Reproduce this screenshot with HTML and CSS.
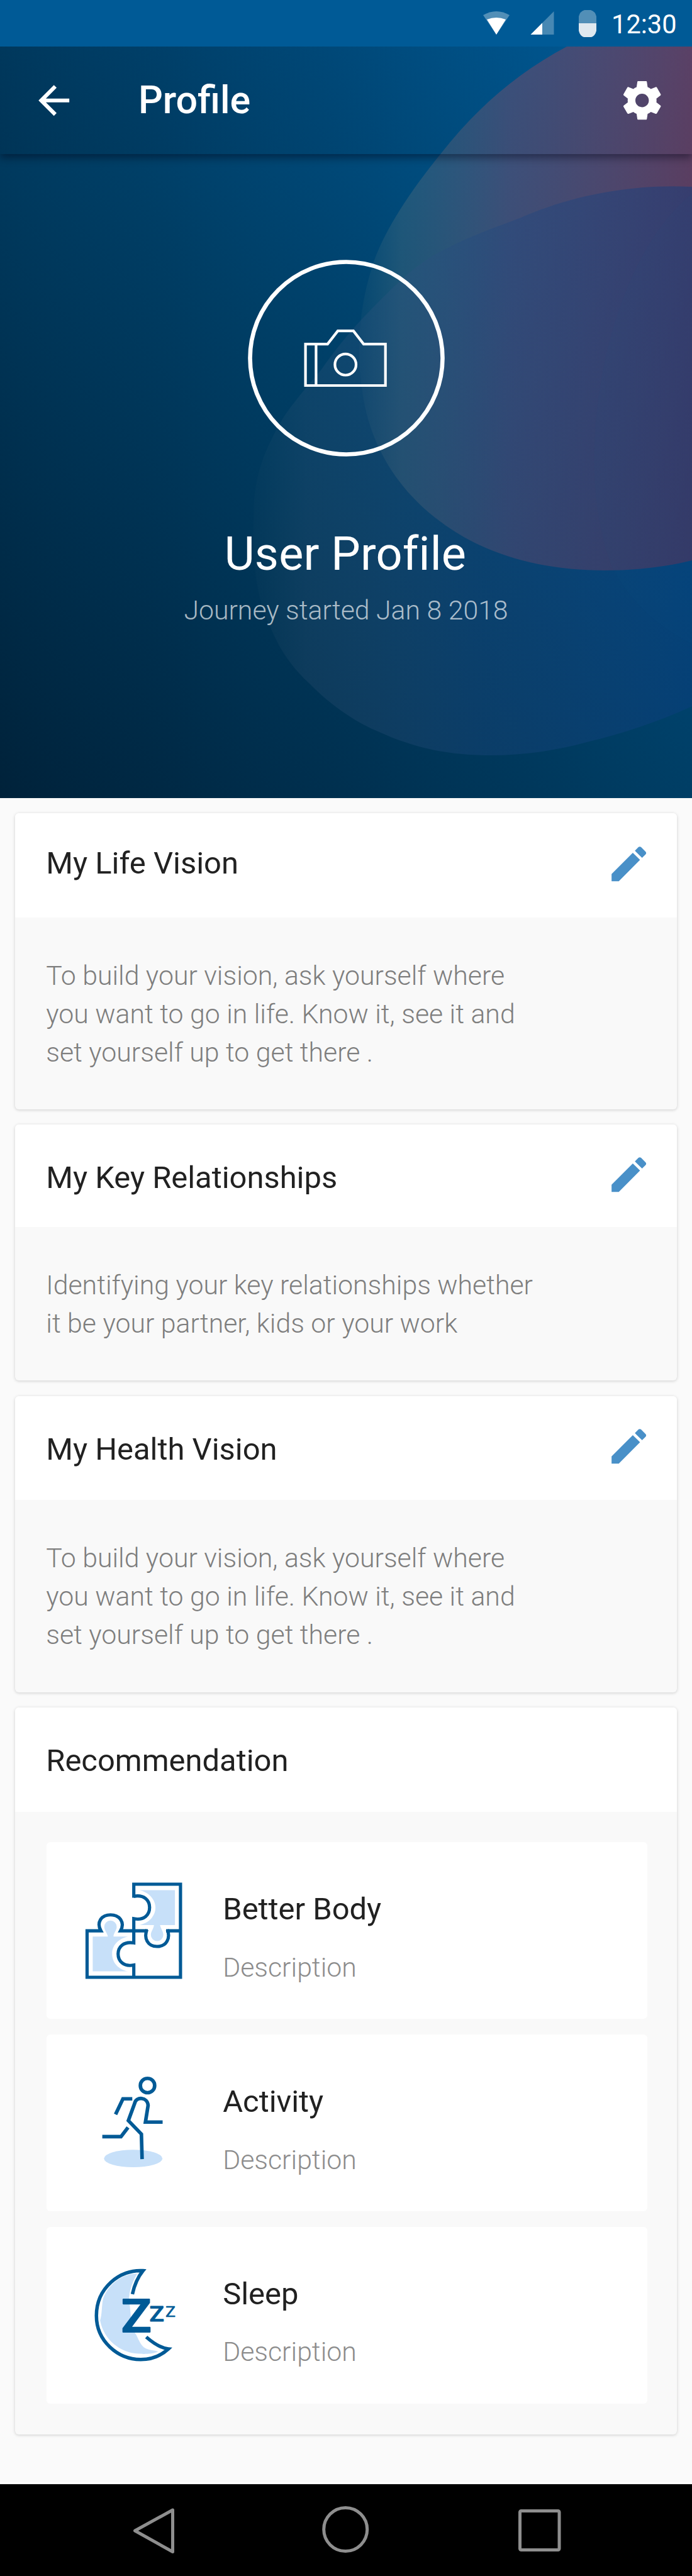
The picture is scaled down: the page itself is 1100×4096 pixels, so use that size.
FILE: index.html
```html
<!DOCTYPE html>
<html lang="en">
<head>
<meta charset="utf-8">
<title>Profile</title>
<link rel="stylesheet" href="styles.css">
</head>
<body>
<div class="status">
  <svg class="wifi" viewBox="0 0 42 37"><path d="M0 6Q21-6 42 6L21 37Z" fill="#fff" opacity=".32"/><path d="M6 13Q21 7 36 13L21 37Z" fill="#fff"/></svg>
  <svg class="signal" viewBox="0 0 38 38"><path d="M38 0V38H0Z" fill="#fff" opacity=".28"/><path d="M19 19V38H0Z" fill="#fff"/></svg>
  <svg class="battery" viewBox="0 0 28 43"><path d="M0 21V10Q2 2 9 0H19Q26 2 28 10V21Z" fill="#fff" opacity=".32"/><path d="M0 21H28V33Q26 41 20 43H8Q2 41 0 33Z" fill="#dfe8ef"/></svg>
  <span class="clock">12:30</span>
</div>
<header class="hero">
  <svg class="blobs" viewBox="0 74 1100 1195" preserveAspectRatio="none">
    <defs>
      <linearGradient id="red" gradientUnits="userSpaceOnUse" x1="574" y1="0" x2="1100" y2="0">
        <stop offset="0" stop-color="#6f8c8c" stop-opacity=".06"/>
        <stop offset=".12" stop-color="#7c8480" stop-opacity=".24"/>
        <stop offset=".45" stop-color="#a05068" stop-opacity=".38"/>
        <stop offset="1" stop-color="#c81f26" stop-opacity=".45"/>
      </linearGradient>
      <linearGradient id="blue" gradientUnits="userSpaceOnUse" x1="403" y1="0" x2="1100" y2="0">
        <stop offset="0" stop-color="#4b6878" stop-opacity=".04"/>
        <stop offset=".12" stop-color="#4b6080" stop-opacity=".18"/>
        <stop offset=".5" stop-color="#204880" stop-opacity=".34"/>
        <stop offset="1" stop-color="#0c3e80" stop-opacity=".46"/>
      </linearGradient>
    </defs>
    <path fill="url(#red)" d="M901 74C820 117 756 174 701 244C648 309 608 372 592 423C570 490 567 560 575 615C585 705 632 780 701 830C770 882 860 907 961 907C1012 907 1060 901 1100 891V74Z"/>
    <path fill="url(#blue)" d="M1100 297C1000 292 905 312 828 346C770 368 735 380 687 407C650 430 622 460 590 492C560 522 533 556 512 586C480 625 452 655 435 692C412 735 403 775 403 820C401 880 405 945 428 993C445 1035 465 1062 491 1086C522 1118 560 1146 603 1164C660 1190 715 1201 779 1201C835 1201 885 1193 933 1180C995 1165 1050 1146 1100 1123Z"/>
    <path fill="#1a5aa0" opacity=".04" d="M1100 308V1024Q1020 985 975 907C905 740 960 420 1100 308Z"/>
  </svg>
  <div class="appbar">
    <svg class="back" viewBox="0 0 24 24"><path fill="#fff" d="M20 11H7.83l5.59-5.59L12 4l-8 8 8 8 1.41-1.41L7.83 13H20v-2z"/></svg>
    <h1 class="title">Profile</h1>
    <svg class="gear" viewBox="0 0 24 24"><path fill="#fff" d="M19.43 12.98c.04-.32.07-.64.07-.98s-.03-.66-.07-.98l2.11-1.65c.19-.15.24-.42.12-.64l-2-3.46c-.12-.22-.39-.3-.61-.22l-2.49 1c-.52-.4-1.08-.73-1.69-.98l-.38-2.65C14.46 2.18 14.25 2 14 2h-4c-.25 0-.46.18-.49.42l-.38 2.65c-.61.25-1.17.59-1.69.98l-2.49-1c-.23-.09-.49 0-.61.22l-2 3.46c-.13.22-.07.49.12.64l2.11 1.65c-.04.32-.07.65-.07.98s.03.66.07.98l-2.11 1.65c-.19.15-.24.42-.12.64l2 3.46c.12.22.39.3.61.22l2.49-1c.52.4 1.08.73 1.69.98l.38 2.65c.03.24.24.42.49.42h4c.25 0 .46-.18.49-.42l.38-2.65c.61-.25 1.17-.59 1.69-.98l2.49 1c.23.09.49 0 .61-.22l2-3.46c.12-.22.07-.49-.12-.64l-2.11-1.65zM12 15.5c-1.93 0-3.5-1.57-3.5-3.5s1.57-3.5 3.5-3.5 3.5 1.57 3.5 3.5-1.57 3.5-3.5 3.5z"/></svg>
  </div>
  <svg class="avatar" viewBox="394 412 313 313" fill="none" stroke="#fff">
    <circle cx="550.5" cy="568.5" r="153" stroke-width="6.6"/>
    <g stroke-width="4.2">
      <path d="M485.6 546.1H520.7L537 525.2H561.8L578 546.1H612.7V612H485.6ZM502.4 546V612"/>
      <circle cx="549.2" cy="578.7" r="16.8"/>
    </g>
  </svg>
  <div class="name">User Profile</div>
  <div class="since">Journey started Jan 8 2018</div>
</header>
<main class="cards">
  <section class="card life">
    <div class="head"><h2>My Life Vision</h2><svg class="edit" viewBox="0 0 24 24"><path d="M3 17.25V21h3.75L17.81 9.94l-3.75-3.75L3 17.25zM20.71 7.04c.39-.39.39-1.02 0-1.41l-2.34-2.34c-.39-.39-1.02-.39-1.41 0l-1.83 1.83 3.75 3.75 1.83-1.83z"/></svg></div>
    <p class="text">To build your vision, ask yourself where<br>you want to go in life. Know it, see it and<br>set yourself up to get there .</p>
  </section>
  <section class="card relations">
    <div class="head"><h2>My Key Relationships</h2><svg class="edit" viewBox="0 0 24 24"><path d="M3 17.25V21h3.75L17.81 9.94l-3.75-3.75L3 17.25zM20.71 7.04c.39-.39.39-1.02 0-1.41l-2.34-2.34c-.39-.39-1.02-.39-1.41 0l-1.83 1.83 3.75 3.75 1.83-1.83z"/></svg></div>
    <p class="text">Identifying your key relationships whether<br>it be your partner, kids or your work</p>
  </section>
  <section class="card health">
    <div class="head"><h2>My Health Vision</h2><svg class="edit" viewBox="0 0 24 24"><path d="M3 17.25V21h3.75L17.81 9.94l-3.75-3.75L3 17.25zM20.71 7.04c.39-.39.39-1.02 0-1.41l-2.34-2.34c-.39-.39-1.02-.39-1.41 0l-1.83 1.83 3.75 3.75 1.83-1.83z"/></svg></div>
    <p class="text">To build your vision, ask yourself where<br>you want to go in life. Know it, see it and<br>set yourself up to get there .</p>
  </section>
  <section class="card recommend">
    <div class="head"><h2>Recommendation</h2></div>
    <div class="items">
      <article class="item">
        <svg class="icon" viewBox="0 0 1200 1200">
          <g fill="#c7e0f9">
            <path d="M610 183H917V485H610C700 465 748 400 748 333S690 200 610 183Z"/>
            <path d="M204 585H335C330 555 304 530 304 500A53 53 0 0 1 412 500C412 530 384 555 384 585H510C420 605 372 665 372 735S420 870 510 887H204Z"/>
            <path d="M735 484H787C793 515 816 540 816 570A54 54 0 0 1 708 570C708 540 734 515 735 484Z"/>
          </g>
          <g fill="none" stroke="#005a96" stroke-width="28">
            <path d="M560 248V131H965V938H155V535H275C235 465 275 397 358 397S485 465 445 535H682M840 535H965"/>
            <path d="M560 236C650 220 697 270 697 333S650 447 560 430V640C470 625 424 675 424 735S470 850 560 832V938"/>
            <path d="M674 524C645 600 680 671 762 671S880 600 851 524"/>
          </g>
        </svg>
        <div><h3>Better Body</h3><p>Description</p></div>
      </article>
      <article class="item">
        <svg class="icon" viewBox="0 -11 1200 1200">
          <ellipse cx="555" cy="830" rx="253" ry="76" fill="#c7e0f9"/>
          <g fill="none" stroke="#005a96" stroke-width="31">
            <circle cx="679" cy="197" r="62"/>
            <path d="M547 312H466L402 447M287 640H449L510 560"/>
            <path d="M810 514H661L684 370C680 295 580 290 568 350L513 501L626 618L632 835"/>
          </g>
        </svg>
        <div><h3>Activity</h3><p>Description</p></div>
      </article>
      <article class="item">
        <svg class="icon" viewBox="0 35 1200 1200">
          <path fill="#c7e0f9" d="M590 206C540 290 520 370 518 430C535 520 530 620 555 700C595 740 600 800 645 842C680 870 740 868 772 882C720 905 640 903 600 900C440 890 300 780 268 610C285 560 280 500 292 430C330 310 450 205 590 206Z"/>
          <path fill="none" stroke="#005a96" stroke-width="30" d="M548 383Q575 260 640 180C440 165 236 330 236 570C236 790 420 950 620 950Q760 950 860 858C790 850 725 805 668 755"/>
          <g class="zzz">
            <text x="452" y="711" font-size="394" font-weight="500" stroke-width="12" textLength="262" lengthAdjust="spacingAndGlyphs">Z</text>
            <text x="695" y="621" font-size="186" font-weight="500" stroke-width="5" textLength="128" lengthAdjust="spacingAndGlyphs">Z</text>
            <text x="834" y="582" font-size="134" font-weight="400" stroke-width="3" textLength="88" lengthAdjust="spacingAndGlyphs">Z</text>
          </g>
        </svg>
        <div><h3>Sleep</h3><p>Description</p></div>
      </article>
    </div>
  </section>
</main>
<nav class="nav">
  <svg class="keys" viewBox="0 3948 1100 146" fill="none" stroke="#8e8e8e" stroke-width="5" stroke-linejoin="round">
    <path d="M274.5 3989V4055.5L214.5 4022Z"/>
    <circle cx="549.2" cy="4020" r="34.5"/>
    <rect x="826.5" y="3990.5" width="62.5" height="62" rx="2"/>
  </svg>
</nav>
</body>
</html>
```
FILE: styles.css
```css
* { box-sizing: border-box; margin: 0; padding: 0; }
body {
  width: 1100px;
  height: 4096px;
  display: flex;
  flex-direction: column;
  background: #fafafa;
  font-family: Roboto, "Liberation Sans", sans-serif;
  overflow: hidden;
}
svg { display: block; flex: none; }
h1, h2, h3 { font-weight: 400; }

.status {
  height: 74px;
  flex: none;
  display: flex;
  align-items: flex-start;
  background: #005a96;
  color: #fff;
}
.wifi { width: 42px; height: 37px; margin: 18px 0 0 768px; }
.signal { width: 38px; height: 37px; margin: 18px 0 0 33px; }
.battery { width: 28px; height: 43px; margin: 16px 0 0 39px; }
.clock { margin: 14px 0 0 24px; font-size: 41.6px; line-height: 50px; }

.hero {
  position: relative;
  height: 1195px;
  flex: none;
  display: flex;
  flex-direction: column;
  align-items: center;
  background: linear-gradient(to top right, #00223a, #003e65 50%, #005c9a);
  color: #fff;
}
.blobs { position: absolute; left: 0; top: 0; width: 1100px; height: 1195px; }
.appbar {
  position: relative;
  width: 100%;
  height: 170.5px;
  flex: none;
  display: flex;
  align-items: center;
  padding: 0 43px 0 49px;
  background: linear-gradient(to right, rgba(0, 20, 40, .14), rgba(0, 20, 40, 0));
  box-shadow: 0 6px 12px rgba(0, 0, 20, .42);
  clip-path: inset(0 0 -30px 0);
}
.back, .gear { width: 73.4px; height: 73.4px; }
.title { flex: 1; margin-left: 97.5px; font-size: 61px; font-weight: 500; line-height: 72px; }
.avatar { position: relative; width: 313px; height: 313px; margin-top: 168px; }
.name { position: relative; margin-top: 112px; font-size: 73.8px; line-height: 86px; letter-spacing: .2px; left: -1px; }
.since {
  position: relative;
  margin-top: 16.5px;
  font-size: 42.8px;
  line-height: 61px;
  font-weight: 300;
  color: rgba(255, 255, 255, .66);
}

.cards {
  height: 2677.5px;
  flex: none;
  display: flex;
  flex-direction: column;
  gap: 24.4px;
  padding: 24px 24.4px 0;
}
.card {
  border-radius: 6px;
  background: #f9f9f9;
  box-shadow: 0 1px 5px rgba(0, 0, 0, .18);
  overflow: hidden;
}
.head {
  height: 165.5px;
  display: flex;
  justify-content: space-between;
  align-items: flex-start;
  padding: 43.5px 39.3px 0 48.9px;
  background: #fff;
}
.relations .head { height: 162.2px; }
.head h2, .item h3 { font-size: 48.9px; line-height: 73.3px; color: #212121; }
.head h2 { margin-top: 4.5px; }
.life .head h2 { margin-top: -1px; }
.relations .edit { margin-top: -.5px; }
.edit { width: 73.3px; height: 73.3px; fill: #4990c8; }
.text {
  padding: 62px 48.9px 60.3px;
  font-size: 42.8px;
  line-height: 61.1px;
  font-weight: 300;
  color: #7e7e7e;
}
.items {
  display: flex;
  flex-direction: column;
  gap: 24.5px;
  padding: 48.9px 46.5px 48.9px 50px;
}
.item {
  height: 281.1px;
  display: flex;
  align-items: flex-start;
  padding: 43px 35.6px 0;
  background: #fff;
  border-radius: 6px;
}
.icon { width: 220px; height: 220px; }
.item div { margin: 27px 0 0 24.2px; }
.item p {
  margin-top: 25.5px;
  font-size: 42.8px;
  line-height: 61.1px;
  font-weight: 300;
  color: #8c8c8c;
}
.zzz {
  fill: #005a96;
  stroke: #005a96;
  stroke-linejoin: round;
  font-family: Roboto, "Liberation Sans", sans-serif;
}
.nav { flex: none; height: 149.5px; border-top: 3px solid #fff; background: #000; }
.keys { width: 1100px; height: 146px; }
```
